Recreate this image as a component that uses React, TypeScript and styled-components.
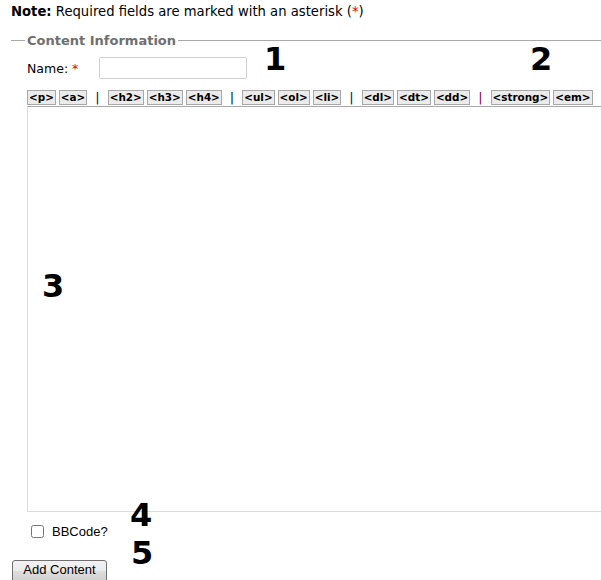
import { Fragment } from "react";
import styled, { createGlobalStyle } from "styled-components";

const GlobalStyle = createGlobalStyle`
  html, body {
    margin: 0;
    padding: 0;
    overflow: hidden;
    background: #fff;
  }
  body {
    font-family: "DejaVu Sans", Verdana, sans-serif;
    font-size: 12px;
    color: #000;
  }
`;

const Page = styled.div`
  position: relative;
  width: 601px;
  height: 580px;
  padding: 4px 0 0 11px;
  box-sizing: border-box;
`;

const Note = styled.p`
  margin: 0;
  font-size: 13.2px;
  line-height: 16px;
`;

const Star = styled.span`
  color: #e00000;
`;

const Fieldset = styled.fieldset`
  margin: 13px 0 0 0;
  padding: 0 0 0 16px;
  border: none;
  border-top: 1px solid #a9a9a9;
  width: 620px;
  min-inline-size: 0;
`;

const Legend = styled.legend`
  margin-left: -2px;
  padding: 0 2px;
  font-weight: bold;
  font-size: 13px;
  color: #6f6f6f;
`;

const NameRow = styled.div`
  display: flex;
  align-items: center;
  margin-top: 9px;
  height: 22px;
`;

const Label = styled.label`
  width: 72px;
  font-size: 12.5px;
`;

const TextInput = styled.input`
  width: 148px;
  height: 22px;
  box-sizing: border-box;
  border: 1px solid #cfcfcf;
  border-radius: 2px;
  padding: 0;
`;

const Toolbar = styled.div`
  display: flex;
  align-items: center;
  gap: 3px;
  margin-top: 11px;
  height: 15px;
`;

const TagButton = styled.button`
  height: 15px;
  margin: 0;
  padding: 0 1px;
  border: 1px solid #a8a8a8;
  background: #ebebeb;
  font-family: "DejaVu Sans", Verdana, sans-serif;
  font-weight: bold;
  font-size: 10.4px;
  line-height: 13px;
  color: #000;
`;

const Sep = styled.span<{ $accent?: boolean }>`
  margin: 0 5px;
  color: ${(p) => (p.$accent ? "#7a0040" : "#00203a")};
  font-size: 13px;
  line-height: 15px;
`;

const Editor = styled.textarea`
  display: block;
  margin-top: 1px;
  width: 600px;
  height: 406px;
  box-sizing: border-box;
  border: 1px solid #dcdcdc;
  border-top-color: #a9a9a9;
  resize: none;
`;

const CheckRow = styled.div`
  display: flex;
  align-items: center;
  margin-top: 12px;
  padding-left: 4px;
  height: 14px;
`;

const Check = styled.input`
  width: 13px;
  height: 13px;
  margin: 0 8px 0 0;
`;

const CheckLabel = styled.span`
  font-family: "Liberation Sans", Arial, sans-serif;
  font-size: 13px;
`;

const Submit = styled.button`
  margin: 22px 0 0 1px;
  width: 95px;
  height: 23px;
  border: 1px solid #707070;
  border-radius: 3px;
  background: linear-gradient(#f2f2f2 0%, #ebebeb 45%, #dddddd 50%, #cfcfcf 100%);
  font-family: "Liberation Sans", Arial, sans-serif;
  font-size: 13px;
  color: #000;
  padding: 0 0 4px;
  line-height: 17px;
`;

const Marker = styled.span<{ $x: number; $y: number }>`
  position: absolute;
  left: ${(p) => p.$x}px;
  top: ${(p) => p.$y}px;
  font-family: "DejaVu Sans", Verdana, sans-serif;
  font-weight: 900;
  font-size: 32px;
  line-height: 32px;
  color: #000;
`;

const groups: string[][] = [
  ["<p>", "<a>"],
  ["<h2>", "<h3>", "<h4>"],
  ["<ul>", "<ol>", "<li>"],
  ["<dl>", "<dt>", "<dd>"],
  ["<strong>", "<em>"],
];

export default function App() {
  return (
    <Page>
      <GlobalStyle />
      <Note>
        <b>Note:</b> Required fields are marked with an asterisk (<Star>*</Star>)
      </Note>
      <Fieldset>
        <Legend>Content Information</Legend>
        <NameRow>
          <Label>
            Name: <Star>*</Star>
          </Label>
          <TextInput type="text" />
        </NameRow>
        <Toolbar>
          {groups.map((g, i) => (
            <Fragment key={i}>
              {g.map((t) => (
                <TagButton key={t} type="button">
                  {t}
                </TagButton>
              ))}
              {i < groups.length - 1 && <Sep $accent={i === groups.length - 2}>|</Sep>}
            </Fragment>
          ))}
        </Toolbar>
        <Editor />
        <CheckRow>
          <Check type="checkbox" />
          <CheckLabel>BBCode?</CheckLabel>
        </CheckRow>
      </Fieldset>
      <Submit type="button">Add Content</Submit>
      <Marker $x={264} $y={43}>1</Marker>
      <Marker $x={530} $y={43}>2</Marker>
      <Marker $x={42} $y={270}>3</Marker>
      <Marker $x={130} $y={499}>4</Marker>
      <Marker $x={131} $y={537}>5</Marker>
    </Page>
  );
}
